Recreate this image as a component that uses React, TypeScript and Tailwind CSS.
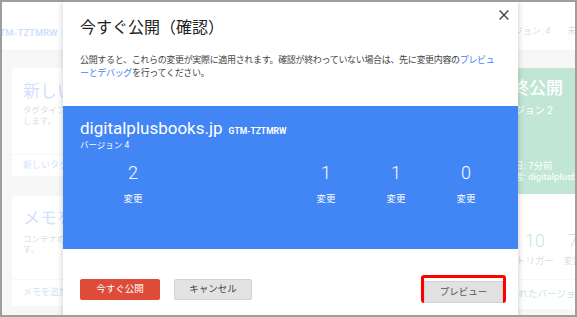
import React from "react";

const stats = [
  { value: "2", label: "変更" },
  { value: "1", label: "変更" },
  { value: "1", label: "変更" },
  { value: "0", label: "変更" },
];

const workspaceStats = [
  { value: "8", label: "タグ" },
  { value: "10", label: "トリガー" },
  { value: "7", label: "変数" },
];

function CloseIcon() {
  return (
    <svg width="10" height="10" viewBox="0 0 10 10" className="block">
      <path d="M0.6 0.6 L9.4 9.4 M9.4 0.6 L0.6 9.4" stroke="#444" strokeWidth="1.4" fill="none" />
    </svg>
  );
}

function Background() {
  return (
    <div className="flex h-full flex-col bg-[#e0e0e0]">
      <div className="flex h-[49px] shrink-0 border-b border-[#cfcfcf] bg-white pt-[26px] text-[9px] leading-[10px]">
        <div className="w-[494px] shrink-0">
          <span className="-ml-[9px] block whitespace-nowrap text-[9.5px] font-bold text-[#4285f4]">GTM-TZTMRW</span>
        </div>
        <span className="-mt-[2px] whitespace-nowrap text-[#757575]">バージョン: 4</span>
        <span className="-mt-[2px] ml-[17px] whitespace-nowrap text-[#757575]">未公開の変更</span>
      </div>

      <div className="flex gap-[12px] pl-[10px] pt-[17px]">
        <div className="flex w-[220px] shrink-0 flex-col gap-[20px]">
          <div className="flex h-[108px] flex-col bg-white">
            <div className="h-[86px] px-[11px] pt-[13px]">
              <div className="text-[17px] leading-[20px] text-[#4285f4]">新しいタグ</div>
              <div className="mt-[4px] text-[8.5px] leading-[11px] text-[#757575]">
                タグタイプを選択して、新しいタグを作成
                <br />
                します。
              </div>
            </div>
            <div className="flex h-[22px] items-center border-t border-[#e0e0e0] px-[11px] text-[9px] text-[#4285f4]">新しいタグを追加</div>
          </div>
          <div className="flex h-[110px] flex-col bg-white">
            <div className="h-[83px] px-[11px] pt-[12px]">
              <div className="text-[17px] leading-[20px] text-[#4285f4]">メモを追加</div>
              <div className="mt-[6px] text-[8.5px] leading-[10px] text-[#757575]">
                コンテナの説明を入力できま
                <br />
                す。
              </div>
            </div>
            <div className="flex h-[27px] items-center border-t border-[#e0e0e0] px-[11px] text-[9px] text-[#4285f4]">メモを追加</div>
          </div>
        </div>

        <div className="flex w-[222px] shrink-0 flex-col gap-[20px]">
          <div className="h-[108px] bg-white" />
          <div className="h-[110px] bg-white" />
        </div>

        <div className="flex w-[130px] shrink-0 flex-col bg-white">
          <div className="flex h-[126px] flex-col bg-[#0f9d58] pb-[12px] pl-[17px] pt-[10px] text-white">
            <div className="whitespace-nowrap text-[17px] font-medium leading-[20px]">最終公開</div>
            <div className="mt-[7px] whitespace-nowrap text-[10px] leading-[12px]">バージョン 2</div>
            <div className="mt-auto whitespace-nowrap text-[9.5px] leading-[11px]">
              作成日: 7分前
              <br />
              公開者: digitalplusbooks.jp
            </div>
          </div>
          <div className="flex h-[85px] pt-[36px]">
            {workspaceStats.map((s) => (
              <div key={s.label} className="flex w-[38px] shrink-0 flex-col items-center">
                <span className="text-[18px] font-light leading-[22px] text-[#0f9d58]">{s.value}</span>
                <span className="mt-[3px] whitespace-nowrap text-[9.5px] leading-[11px] text-[#757575]">{s.label}</span>
              </div>
            ))}
          </div>
          <div className="flex h-[30px] items-center whitespace-nowrap border-t border-[#e0e0e0] pl-[12px] text-[9.5px] text-[#0f9d58]">
            公開されたバージョンを表示
          </div>
        </div>
      </div>
    </div>
  );
}

function PublishDialog() {
  return (
    <div className="absolute left-[61px] top-0 h-[330px] w-[455px] bg-white shadow-[0_0_6px_rgba(0,0,0,0.22)]">
      <button className="absolute right-[9px] top-[8px]">
        <CloseIcon />
      </button>
      <h1 className="px-[17px] pt-[16px] text-[16px] font-normal leading-[20px] text-[#212121]">今すぐ公開（確認）</h1>
      <p className="mt-[16px] whitespace-nowrap px-[17px] text-[9px] leading-[13px] tracking-[-0.33px] text-[#444]">
        公開すると、これらの変更が実際に適用されます。確認が終わっていない場合は、先に変更内容の<span className="text-[#4285f4]">プレビュ</span>
        <br />
        <span className="text-[#4285f4]">ーとデバッグ</span>を行ってください。
      </p>

      <div className="mt-[26px] h-[143px] bg-[#4285f4] px-[17px] pt-[12px] text-white">
        <div className="flex items-baseline whitespace-nowrap">
          <span className="text-[17px] leading-[20px]">digitalplusbooks.jp</span>
          <span className="ml-[6px] text-[8.5px] font-bold">GTM-TZTMRW</span>
        </div>
        <div className="mt-[2px] text-[8.5px] leading-[10px]">バージョン 4</div>
        <div className="mt-[12px] flex">
          {stats.map((s, i) => (
            <div key={i} className={i === 0 ? "ml-[18px] mr-auto flex w-[70px] flex-col items-center" : "flex w-[70px] flex-col items-center"}>
              <span className="text-[18px] font-light leading-[22px]">{s.value}</span>
              <span className="mt-[9px] text-[9.5px] leading-[12px]">{s.label}</span>
            </div>
          ))}
        </div>
      </div>

      <div className="mt-[26px] flex h-[28px] items-center pl-[17px] pr-[12px]">
        <button className="h-[21px] w-[80px] rounded-[2px] bg-[#dd4b39] text-[9.5px] text-white">今すぐ公開</button>
        <button className="ml-[14px] h-[21px] w-[78px] rounded-[2px] border border-[#d2d2d2] bg-[#e3e3e3] text-[9.5px] text-[#444]">キャンセル</button>
        <div className="ml-auto h-[28px] w-[85px] rounded-[3px] border-[3px] border-[#ff0000]">
          <button className="h-full w-full border border-[#d2d2d2] bg-[#e1e1e1] text-[9.5px] text-[#555]">プレビュー</button>
        </div>
      </div>
    </div>
  );
}

export default function App() {
  return (
    <div className="relative h-[317px] w-[577px] overflow-hidden border-2 border-[#9e9e9e] font-['Roboto','Noto_Sans_CJK_JP',sans-serif]">
      <Background />
      <div className="absolute inset-0 bg-white/75" />
      <PublishDialog />
    </div>
  );
}
